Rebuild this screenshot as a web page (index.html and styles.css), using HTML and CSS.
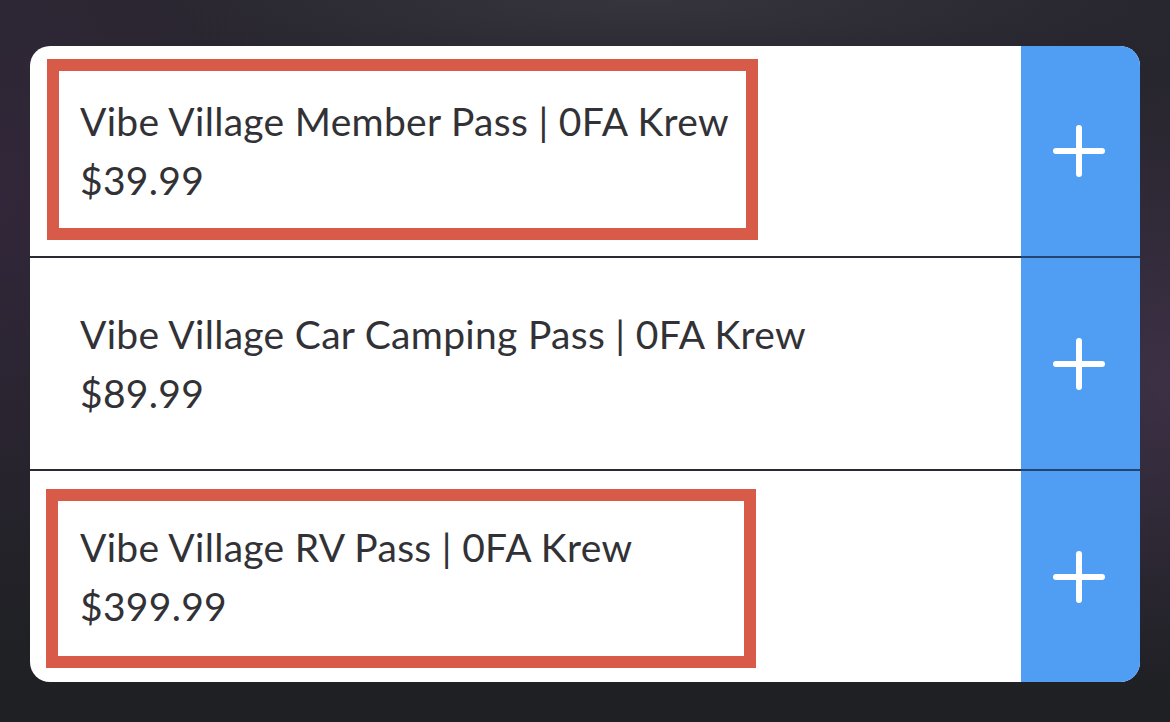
FILE: index.html
```html
<!DOCTYPE html>
<html lang="en">
<head>
<meta charset="utf-8">
<title>Vibe Village Passes</title>
<link rel="stylesheet" href="styles.css">
</head>
<body>
<main class="card">
  <section class="row row-first">
    <div class="info">
      <div class="title">Vibe Village Member Pass | 0FA Krew</div>
      <div class="price">$39.99</div>
    </div>
    <button class="add" aria-label="Add">
      <svg class="plus" viewBox="0 0 52 52" width="52" height="52"><path d="M26 3V49M3 26H49" stroke="#fff" stroke-width="6" stroke-linecap="round" fill="none"/></svg>
    </button>
    <div class="mark mark-a"></div>
  </section>
  <section class="row">
    <div class="info">
      <div class="title">Vibe Village Car Camping Pass | 0FA Krew</div>
      <div class="price">$89.99</div>
    </div>
    <button class="add" aria-label="Add">
      <svg class="plus" viewBox="0 0 52 52" width="52" height="52"><path d="M26 3V49M3 26H49" stroke="#fff" stroke-width="6" stroke-linecap="round" fill="none"/></svg>
    </button>
  </section>
  <section class="row row-last">
    <div class="info">
      <div class="title">Vibe Village RV Pass | 0FA Krew</div>
      <div class="price">$399.99</div>
    </div>
    <button class="add" aria-label="Add">
      <svg class="plus" viewBox="0 0 52 52" width="52" height="52"><path d="M26 3V49M3 26H49" stroke="#fff" stroke-width="6" stroke-linecap="round" fill="none"/></svg>
    </button>
    <div class="mark mark-b"></div>
  </section>
</main>
</body>
</html>
```

FILE: styles.css
```css
html, body {
  margin: 0;
  padding: 0;
}

body {
  width: 1170px;
  height: 722px;
  overflow: hidden;
  font-family: "Lato", "Liberation Sans", sans-serif;
  background:
    radial-gradient(ellipse 420px 300px at 1170px 380px, rgba(80, 58, 92, 0.55), rgba(80, 58, 92, 0) 100%),
    radial-gradient(ellipse 500px 80px at 640px 0px, rgba(80, 80, 90, 0.35), rgba(80, 80, 90, 0) 100%),
    radial-gradient(ellipse 300px 400px at 0px 200px, rgba(60, 40, 70, 0.5), rgba(60, 40, 70, 0) 100%),
    linear-gradient(180deg, #28262e 0%, #25242b 50%, #1f2024 100%);
  padding-top: 46px;
  box-sizing: border-box;
}

.card {
  margin: 0 30px;
  width: 1110px;
  border-radius: 20px;
  overflow: hidden;
  display: flex;
  flex-direction: column;
  gap: 2px;
  background: linear-gradient(90deg, #2b2a32 0, #2b2a32 991px, #234473 991px, #234473 100%);
}

.row {
  position: relative;
  display: grid;
  grid-template-columns: 1fr 119px;
  height: 211px;
  background: #fff;
}

.row-first {
  height: 210px;
}

.info {
  display: flex;
  flex-direction: column;
  justify-content: center;
  padding-left: 50px;
  color: #323236;
  font-size: 39px;
  line-height: 59px;
  letter-spacing: 0.3px;
  font-weight: 400;
}

.add {
  border: 0;
  margin: 0;
  padding: 0 3px 0 0;
  background: #4f9ef4;
  display: flex;
  align-items: center;
  justify-content: center;
}

.plus {
  display: block;
}

.mark {
  position: absolute;
  border: 12px solid #d75b48;
  box-sizing: border-box;
  pointer-events: none;
}

.mark-a {
  left: 17px;
  top: 13px;
  width: 711px;
  height: 181px;
}

.mark-b {
  left: 16px;
  top: 18px;
  width: 710px;
  height: 179px;
}
```
